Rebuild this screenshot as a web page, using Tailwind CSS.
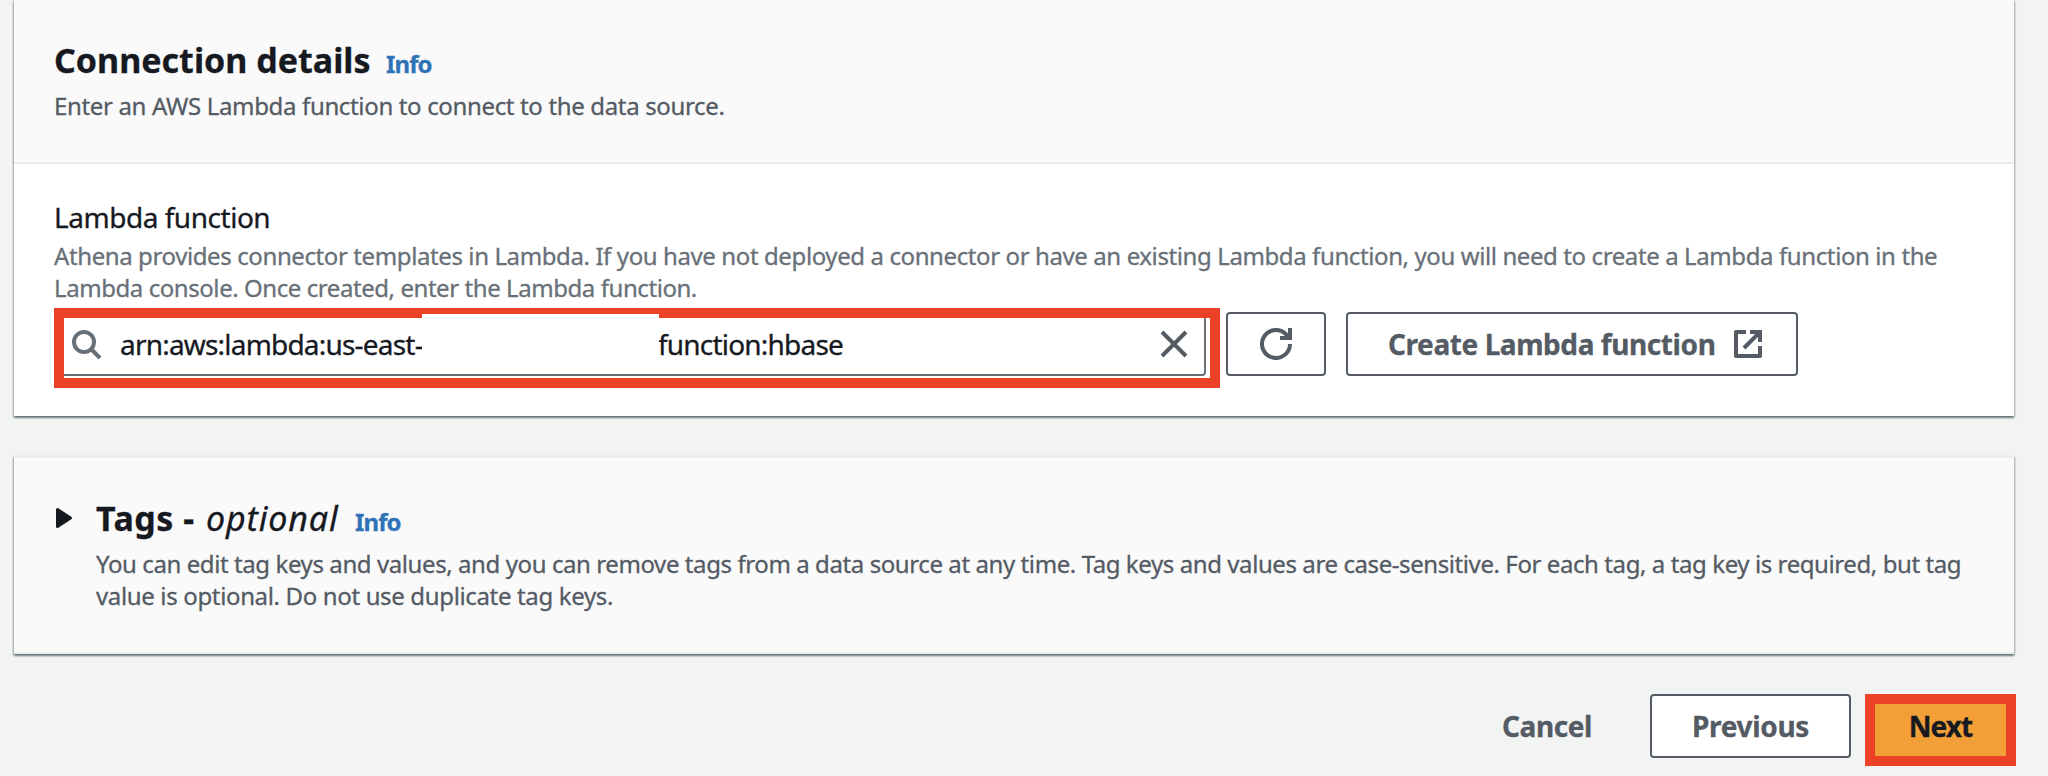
<!DOCTYPE html>
<html lang="en">
<head>
<meta charset="utf-8">
<title>Connection details</title>
<script src="https://cdn.jsdelivr.net/npm/@tailwindcss/browser@4"></script>
</head>
<body class="h-[776px] overflow-hidden bg-[#f2f3f3] font-['Noto_Sans',sans-serif] text-[#16191f] [-webkit-text-stroke:0.3px]">
<main class="flex w-[2014px] flex-col pl-[14px]">

  <!-- Connection details -->
  <section class="h-[416px] bg-white shadow-[0_2px_2px_0_rgba(0,28,36,0.45),1px_1px_2px_0_rgba(0,28,36,0.2),-1px_1px_2px_0_rgba(0,28,36,0.2)]">
    <header class="h-[164px] border-b-2 border-[#eaeded] bg-[#fafafa] pt-[38px] pl-10">
      <div class="flex h-[44px] items-baseline leading-[44px]">
        <h2 class="w-[332px] whitespace-nowrap text-[34px] font-bold">Connection details</h2>
        <a class="text-[24px] font-bold tracking-[-0.9px] text-[#2e73b8]">Info</a>
      </div>
      <p class="mt-2 whitespace-nowrap text-[24px] leading-8 tracking-[-0.345px] text-[#545b64]">Enter an AWS Lambda function to connect to the data source.</p>
    </header>
    <div class="pt-[33px] pl-10">
      <label class="block h-10 whitespace-nowrap text-[28px] leading-10 tracking-[-0.47px]">Lambda function</label>
      <p class="mt-[3px] whitespace-nowrap text-[24px] leading-8 tracking-[-0.397px] text-[#687078]">Athena provides connector templates in Lambda. If you have not deployed a connector or have an existing Lambda function, you will need to create a Lambda function in the<br><span class="tracking-[-0.435px]">Lambda console. Once created, enter the Lambda function.</span></p>
      <div class="mt-2 flex h-16">
        <div class="relative flex h-16 w-[1152px] items-center rounded border-2 border-[#687078] bg-white">
          <svg class="mt-[3px] ml-[14px] h-8 w-8 shrink-0" viewBox="0 0 32 32" fill="none" stroke="#687078" stroke-width="4"><circle cx="14" cy="12" r="10"/><path d="M21 19l9 9"/></svg>
          <span class="ml-[18px] w-[538px] whitespace-nowrap text-[28px] leading-[60px] tracking-[-0.8px]">arn:aws:lambda:us-east-</span>
          <span class="whitespace-nowrap text-[28px] leading-[60px] tracking-[-0.8px]">function:hbase</span>
          <svg class="absolute top-[16px] left-[1104px] h-7 w-7" viewBox="0 0 28 28" fill="none" stroke="#545b64" stroke-width="4"><path d="M2 2l24 24M26 2L2 26"/></svg>
          <div class="absolute -top-[6px] -left-[2px] h-20 w-[1166px] border-[10px] border-[#eb4127]"></div>
          <div class="absolute top-0 left-[366px] h-[54px] w-[237px] bg-white"></div>
        </div>
        <button class="ml-5 flex h-16 w-[100px] items-center justify-center rounded border-2 border-[#545b64] bg-white">
          <svg class="h-8 w-8" viewBox="0 0 32 32" fill="none" stroke="#545b64" stroke-width="4"><path d="M30 16A14 14 0 1 1 25.500 5.700L29 10"/><path d="M30 0V10H20"/></svg>
        </button>
        <button class="ml-5 flex h-16 w-[452px] items-center rounded border-2 border-[#545b64] bg-white pl-10 text-[28px] font-bold text-[#545b64]">
          <span class="w-[346px] whitespace-nowrap text-left leading-[60px] tracking-[-0.42px]">Create Lambda function</span>
          <svg class="h-7 w-7" viewBox="0 0 28 28" fill="none" stroke="#545b64" stroke-width="4"><path d="M12 2H2V26H26V16" stroke-linejoin="round"/><path d="M16 2H26V12M26 2L10 18"/></svg>
        </button>
      </div>
    </div>
  </section>

  <!-- Tags -->
  <section class="mt-10 h-[198px] border-y-2 border-[#eaeded] bg-[#fafafa] pt-[38px] pl-10 shadow-[0_2px_2px_0_rgba(0,28,36,0.45),1px_1px_2px_0_rgba(0,28,36,0.2),-1px_1px_2px_0_rgba(0,28,36,0.2)]">
    <div class="flex">
      <svg class="mt-[10px] h-6 w-[42px] shrink-0" viewBox="0 0 42 24" fill="#16191f" stroke="#16191f" stroke-width="3" stroke-linejoin="round"><path d="M3.500 3.500V20.500L16.500 12z"/></svg>
      <div>
        <div class="flex h-[44px] items-baseline whitespace-nowrap leading-[44px]">
          <h2 class="w-[110px] text-[34px] font-bold tracking-[0.5px]">Tags -</h2>
          <em class="w-[149px] text-[34px] tracking-[0.85px]">optional</em>
          <a class="text-[24px] font-bold tracking-[-0.9px] text-[#2e73b8]">Info</a>
        </div>
        <p class="mt-2 whitespace-nowrap text-[24px] leading-8 tracking-[-0.412px] text-[#545b64]">You can edit tag keys and values, and you can remove tags from a data source at any time. Tag keys and values are case-sensitive. For each tag, a tag key is required, but tag<br><span class="tracking-[-0.35px]">value is optional. Do not use duplicate tag keys.</span></p>
      </div>
    </div>
  </section>

  <!-- Actions -->
  <footer class="-mr-[2px] mt-10 flex items-start justify-end text-[28px] font-bold leading-[60px]">
    <button class="h-16 w-[150px] border-2 border-transparent text-left tracking-[-0.4px] text-[#545b64]">Cancel</button>
    <button class="h-16 w-[201px] rounded border-2 border-[#545b64] bg-white tracking-[-0.3px] text-[#545b64]">Previous</button>
    <button class="ml-[14px] h-[72px] w-[151px] border-[10px] border-[#eb4127] bg-[#f29f38] pb-2 leading-[44px] tracking-[-0.9px]">Next</button>
  </footer>
</main>
</body>
</html>
